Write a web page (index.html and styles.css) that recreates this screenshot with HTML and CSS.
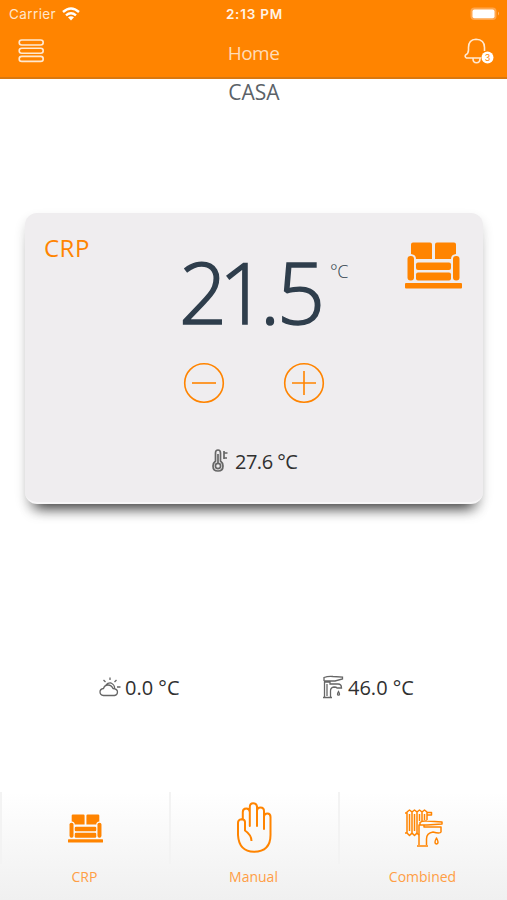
FILE: index.html
```html
<!DOCTYPE html>
<html lang="en">
	<head>
		<meta charset="UTF-8" />
		<meta name="viewport" content="width=device-width, initial-scale=1.0" />
		<title>Home</title>
		<link rel="stylesheet" href="styles.css">
	</head>
	<body>
		<svg width="0" height="0" class="sprite">
			<symbol id="sofa" viewBox="0 0 57 47">
				<path d="M8 0.5H25Q27 0.5 27 2.5V17H11Q11 12.5 6 12V2.5Q6 0.5 8 0.5ZM32 0.5H49Q51 0.5 51 2.5V12Q46 12.5 46 17H30V2.5Q30 0.5 32 0.5Z" />
				<rect x="2.5" y="14" width="6.5" height="24.5" rx="3" />
				<rect x="48" y="14" width="6.5" height="24.5" rx="3" />
				<rect x="11" y="20.5" width="35" height="7.5" rx="2" />
				<rect x="11" y="30.5" width="35" height="8" rx="2" />
				<rect x="0" y="41" width="57" height="5.5" rx="1" />
			</symbol>
		</svg>

		<header class="header">
			<div class="status">
				<div class="carrier">
					<span>Carrier</span>
					<svg width="18" height="14" viewBox="0 0 18 14">
						<g fill="none" stroke="#fff" stroke-width="2.4">
							<path d="M1 5Q9-2 17 5" />
							<path d="M4 8.3Q9 4 14 8.3" />
						</g>
						<path d="M6 10.3Q9 8 12 10.3L9 13.5Z" fill="#fff" />
					</svg>
				</div>
				<div class="clock">2:13 PM</div>
				<div class="battery">
					<svg width="30" height="14" viewBox="0 0 30 14">
						<rect x="0.5" y="0.5" width="26" height="12.5" rx="4" fill="#ffa64d" />
						<rect x="2.5" y="2.5" width="22" height="8.7" rx="2" fill="#fff" />
						<path d="M28 4.5Q30 6.5 28 8.5Z" fill="#ffb870" />
					</svg>
				</div>
			</div>
			<div class="toolbar">
				<svg width="27" height="24" viewBox="0 0 27 24" class="line">
					<rect x="1.2" y="1" width="24" height="5" rx="2.5" />
					<rect x="1.2" y="9.2" width="24" height="5" rx="2.5" />
					<rect x="1.2" y="17.4" width="24" height="5" rx="2.5" />
				</svg>
				<h1>Home</h1>
				<svg width="30" height="27" viewBox="0 0 30 27" class="line bell">
					<path d="M17 20H2.5Q.5 19 1.5 17Q4.5 15.5 4.5 12V9.5Q4.5 1.5 12 1.2Q20.5 1.5 20.5 9.5V13M9 20.5Q9 24.8 12.5 24.8Q16 24.8 16 20.5" />
					<circle cx="23.5" cy="19.5" r="6" fill="#fff" stroke="none" />
					<text x="23.5" y="22.8" text-anchor="middle" class="badge">3</text>
				</svg>
			</div>
		</header>

		<main class="main">
			<h2>CASA</h2>

			<section class="card">
				<div class="zone">CRP</div>
				<div class="target">
					<div class="degrees"><span class="two">2</span><span class="one">1</span><span class="dot">.</span><span class="five">5</span></div>
					<span class="unit">°C</span>
				</div>
				<svg width="57" height="47" class="sofa"><use href="#sofa" /></svg>
				<div class="controls">
					<svg width="42" height="42" viewBox="0 0 42 42">
						<circle cx="21" cy="21" r="19.3" />
						<path d="M9 21H33" />
					</svg>
					<svg width="42" height="42" viewBox="0 0 42 42">
						<circle cx="21" cy="21" r="19.3" />
						<path d="M9 21H33M21 9V33" />
					</svg>
				</div>
				<div class="reading current">
					<svg width="17" height="24" viewBox="0 0 17 24">
						<path d="M3.5 12V4Q3.5 1 6 1Q8.5 1 8.5 4V12Q11 14 11 17Q11 22 6 22Q1 22 1 17Q1 14 3.5 12ZM6 5V14M12 2V10M12 4H15.5M12 9H15" />
						<circle cx="6" cy="17" r="2.6" />
					</svg>
					<span>27.6 °C</span>
				</div>
			</section>

			<div class="sensors">
				<div class="reading outside">
					<svg width="22" height="20" viewBox="0 0 22 20">
						<path d="M4.5 18.5Q1 18 1 15Q1 12 4.5 11.5Q5.5 8 9 8Q12.5 8 14 11.5Q18.5 12 18.5 15Q18.5 18 15.5 18.5ZM7 8Q9 5.5 12 6Q16 8 15.5 11.5M11 .5V3M4.5 3L6.5 5M17.5 3L15.5 5M18 10H21.5" />
					</svg>
					<span>0.0 °C</span>
				</div>
				<div class="reading water">
					<svg width="22" height="24" viewBox="0 0 22 24">
						<path d="M2.5 22V7H8V9H16Q19.5 9 19.5 13H15Q14.5 12 12 12Q8.5 12.5 8.5 16V22M1 22.5H10M2 6V2.5Q6 1 11 1.5L20.5 2V4L13 6H2M5 9V21M16.5 16.5Q14.5 20 16.5 20.2Q18.5 20 16.5 16.5Z" />
					</svg>
					<span>46.0 °C</span>
				</div>
			</div>
		</main>

		<nav class="nav">
			<a class="tab">
				<span class="icon"><svg width="35" height="29"><use href="#sofa" /></svg></span>
				<span class="label">CRP</span>
			</a>
			<a class="tab">
				<span class="icon">
					<svg width="37" height="52" viewBox="0 0 37 52" class="outline">
						<path d="M15.5 39Q15.5 33 9 28.5V20Q9 17.2 5.5 17.2Q2 17.5 2 21V33Q3 49.5 18 49.8Q34.5 49.5 34.5 33V15Q34.5 11.5 31.5 11.5Q28 11.5 28 15V27V9Q28 5.5 24.5 5.5Q21 5.5 21 9V24V4.5Q20.5 1.2 17.2 1.2Q13.8 1.2 13.8 5V24V10Q13.5 6.5 10.2 6.5Q6.8 6.5 6.8 10V17.2M9 20V26" />
					</svg>
				</span>
				<span class="label">Manual</span>
			</a>
			<a class="tab">
				<span class="icon">
					<svg width="38" height="39" viewBox="0 0 38 39" class="outline thin">
						<path d="M2 3V24L4.5 26.5L7 24V3L4.5 1ZM7 3V24L9.5 26.5L12 24V3L9.5 1ZM12 3V24L14 26M12 3L14.5 1L17 3V12M17 3L19.5 1L22 3V11M22 3.5H26.5V6H22M0 4H2M0 24H2M4.5 5V22M9.5 5V22M14.5 5V12M19.5 5V11" />
						<path d="M14 36V16H19V18H36V23Q35 25 28 23Q21.5 24 21.5 30V36M12 37H23M15 13.5Q17 11.5 22 12L37 13V15L22 16H15ZM31.5 29Q28.5 34.5 31.5 35Q34.5 34.5 31.5 29Z" />
					</svg>
				</span>
				<span class="label">Combined</span>
			</a>
		</nav>
	</body>
</html>
```
FILE: styles.css
```css
* {
	box-sizing: border-box;
}
body {
	margin: 0;
	height: 900px;
	display: flex;
	flex-direction: column;
	overflow: hidden;
	background: #fff;
	font-family: 'Open Sans', 'Noto Sans', sans-serif;
	font-weight: 300;
}
h1,
h2 {
	margin: 0;
	font-weight: 400;
}
.sprite {
	position: absolute;
}

/* header */
.header {
	height: 79px;
	background: #ff8400;
	border-bottom: 2px solid #d9780f;
	color: #fff;
}
.status {
	height: 27px;
	display: grid;
	grid-template-columns: 1fr 1fr 1fr;
	align-items: center;
	font-family: Inter, sans-serif;
	font-size: 13.5px;
	padding: 0 7px 0 9px;
}
.carrier {
	display: flex;
	align-items: center;
	gap: 6px;
	font-weight: 400;
	color: #ffe6cc;
	letter-spacing: 0.4px;
}
.clock {
	text-align: center;
	font-weight: 600;
	letter-spacing: 0.8px;
	color: #fff3e6;
}
.battery {
	text-align: right;
	line-height: 0;
}
.toolbar {
	height: 50px;
	display: grid;
	grid-template-columns: 1fr 1fr 1fr;
	align-items: center;
	padding: 0 13px 0 18px;
}
.toolbar h1 {
	font-size: 19px;
	letter-spacing: -0.5px;
	text-align: center;
	padding: 2px 5px 0 0;
	color: #ffdcb8;
}
.line {
	fill: none;
	stroke: #ffe9d2;
	stroke-width: 1.6;
}
.toolbar .line {
	margin-bottom: 2px;
}
.bell {
	justify-self: end;
}
.badge {
	font: 9px Inter, sans-serif;
	fill: #ff8400;
	stroke: none;
}

/* content */
.main {
	flex: 1;
}
.main h2 {
	height: 134px;
	padding-left: 1px;
	text-align: center;
	font-size: 21px;
	line-height: 27px;
	color: #5b6268;
}
.card {
	height: 291px;
	margin: 0 24px 0 25px;
	padding: 0 21px 0 19px;
	border-radius: 12px;
	background: #efedef;
	border-bottom: 2px solid #f7f6f7;
	box-shadow: 0 14px 14px -10px rgba(0, 0, 0, 0.75), 0 6px 12px rgba(0, 0, 0, 0.14);
	display: grid;
	grid-template-columns: 139px 170px 1fr;
	grid-template-rows: 149px 44px 1fr;
}
.zone {
	padding-top: 19px;
	font-size: 24px;
	line-height: 32px;
	font-weight: 400;
	letter-spacing: 0.5px;
	color: #ff8400;
}
.target {
	display: flex;
	padding-top: 36px;
	color: #2f3e4c;
}
.degrees {
	width: 149px;
	margin-left: -4px;
	font-size: 84px;
	line-height: 86px;
	white-space: nowrap;
	-webkit-text-stroke: 1.6px #2f3e4c;
}
.two {
	letter-spacing: -8px;
}
.one {
	letter-spacing: -7px;
}
.dot {
	letter-spacing: -3px;
}
.unit {
	margin-left: 2px;
	font-size: 18px;
	line-height: 45px;
	letter-spacing: -0.5px;
}
.sofa {
	justify-self: end;
	margin-top: 29px;
	fill: #ff8400;
}
.controls {
	grid-column: 2;
	display: flex;
	gap: 58px;
	fill: none;
	stroke: #ff8400;
	stroke-width: 1.6;
}
.reading {
	display: flex;
	align-items: center;
	font-size: 20px;
	line-height: 28px;
	white-space: nowrap;
	font-weight: 400;
	color: #303030;
}
.reading svg {
	fill: none;
	stroke: #666;
	stroke-width: 1.3;
}
.current {
	grid-column: 2;
	align-self: start;
	padding: 42px 0 0 29px;
	gap: 6px;
	letter-spacing: -0.5px;
}
.current svg {
	margin-bottom: 3px;
	stroke-width: 1.7;
}
.sensors {
	display: grid;
	grid-template-columns: 223px 1fr;
	padding: 168px 0 0 99px;
}
.outside,
.water {
	gap: 4px;
}
.sensors span {
	padding-top: 2px;
}
.sensors svg {
	margin-bottom: 1px;
}

/* bottom tabs */
.nav {
	height: 108px;
	display: grid;
	grid-template-columns: 169px 169px 169px;
	background: linear-gradient(#fff, #f0f0f0);
	color: #ff9e45;
}
.tab {
	display: flex;
	flex-direction: column;
	align-items: center;
}
.icon {
	width: 100%;
	height: 72px;
	display: flex;
	align-items: center;
	justify-content: center;
	border-left: 2px solid #f3f3f3;
	fill: #ff8400;
}
.outline {
	fill: none;
	stroke: #ff8400;
	stroke-width: 2;
	stroke-linejoin: round;
}
.thin {
	stroke-width: 1.5;
}
.label {
	font-size: 14px;
	font-weight: 400;
	line-height: 26px;
}
```
